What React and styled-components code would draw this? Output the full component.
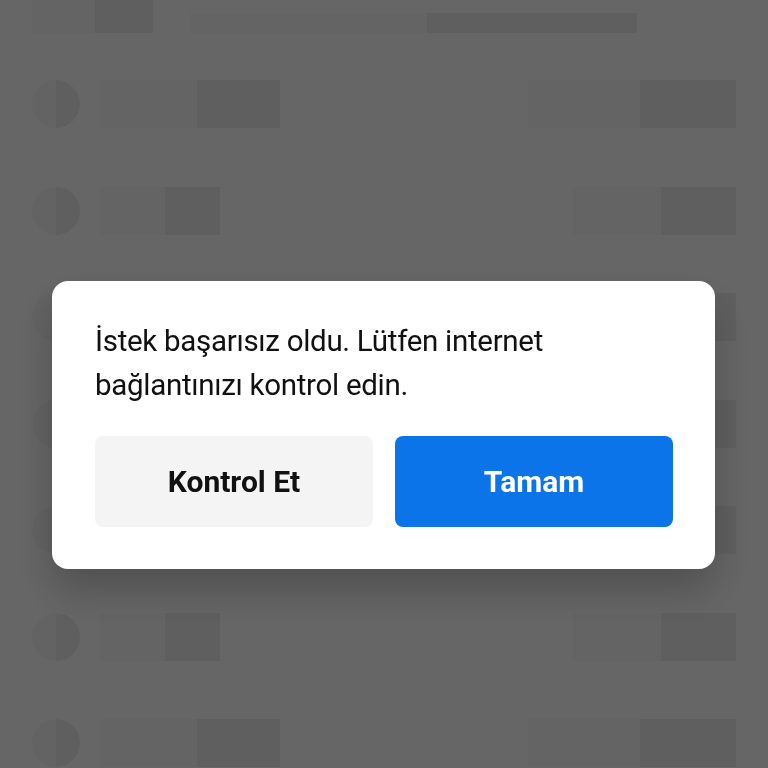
import styled, { createGlobalStyle } from "styled-components";

const GlobalStyle = createGlobalStyle`
  html, body {
    margin: 0;
    padding: 0;
    background: #ffffff;
    font-family: Roboto, "Noto Sans", "Liberation Sans", sans-serif;
  }
  * { box-sizing: border-box; }
`;

// ===== skeleton page under the dialog =====
const Page = styled.div`
  width: 768px;
  height: 768px;
  overflow: hidden;
  padding: 0 32px;
  display: flex;
  flex-direction: column;
`;

const Header = styled.div`
  height: 33px;
  display: flex;
  align-items: flex-end;
  gap: 37px;
  flex-shrink: 0;
`;

const Block = styled.div`
  width: ${p => p.w}px;
  height: ${p => p.h || 48}px;
  flex-shrink: 0;
  background: linear-gradient(90deg, #f9f9f9 0 ${p => p.split || 54}%, #eeeeee ${p => p.split || 54}% 100%);
`;

const List = styled.div`
  margin-top: 47px;
  display: flex;
  flex-direction: column;
  gap: 58.5px;
`;

const Row = styled.div`
  height: 48px;
  display: flex;
  align-items: center;
  flex-shrink: 0;
`;

const Avatar = styled.div`
  width: 48px;
  height: 48px;
  border-radius: 50%;
  background: linear-gradient(90deg, #f7f7f7 0 50%, #eeeeee 50% 100%);
  margin-right: 20px;
`;

const Spacer = styled.div`
  flex: 1;
`;

// ===== dialog =====
const Overlay = styled.div`
  position: fixed;
  inset: 0;
  background: rgba(0, 0, 0, 0.6);
  display: flex;
  align-items: flex-start;
  justify-content: center;
  padding-top: 281px;
`;

const Dialog = styled.div`
  width: 663px;
  height: 288px;
  margin-left: -1px;
  background: #ffffff;
  border-radius: 16px;
  box-shadow: 0 22px 40px rgba(0, 0, 0, 0.22);
  padding: 38px 42px 42px 43px;
  display: flex;
  flex-direction: column;
`;

const Message = styled.p`
  margin: 0;
  font-size: 29.5px;
  line-height: 44px;
  color: #111111;
  letter-spacing: -0.3px;
`;

const Actions = styled.div`
  margin-top: auto;
  display: grid;
  grid-template-columns: 1fr 1fr;
  gap: 22px;
`;

const Button = styled.button`
  height: 91px;
  border: none;
  border-radius: 8px;
  font-family: Roboto, "Noto Sans", "Liberation Sans", sans-serif;
  font-size: 30px;
  font-weight: 700;
  background: ${p => p.primary ? '#0a74e8' : '#f4f4f4'};
  color: ${p => p.primary ? '#ffffff' : '#111111'};
  cursor: pointer;
`;

const rows = [
  { left: 180, right: 208 },
  { left: 120, right: 163 },
  { left: 180, right: 208 },
  { left: 120, right: 163 },
  { left: 180, right: 208 },
  { left: 120, right: 163 },
  { left: 180, right: 208 },
];

const App = () => (
  <>
    <GlobalStyle />
    <Page>
      <Header>
        <Block w={121} h={33} split={52} />
        <Block w={447} h={20} split={53} />
      </Header>
      <List>
        {rows.map((r, i) => (
          <Row key={i}>
            <Avatar />
            <Block w={r.left} />
            <Spacer />
            <Block w={r.right} />
          </Row>
        ))}
      </List>
    </Page>

    <Overlay>
      <Dialog>
        <Message>
          İstek başarısız oldu. Lütfen internet
          <br />
          bağlantınızı kontrol edin.
        </Message>
        <Actions>
          <Button>Kontrol Et</Button>
          <Button primary>Tamam</Button>
        </Actions>
      </Dialog>
    </Overlay>
  </>
);

export default App;
